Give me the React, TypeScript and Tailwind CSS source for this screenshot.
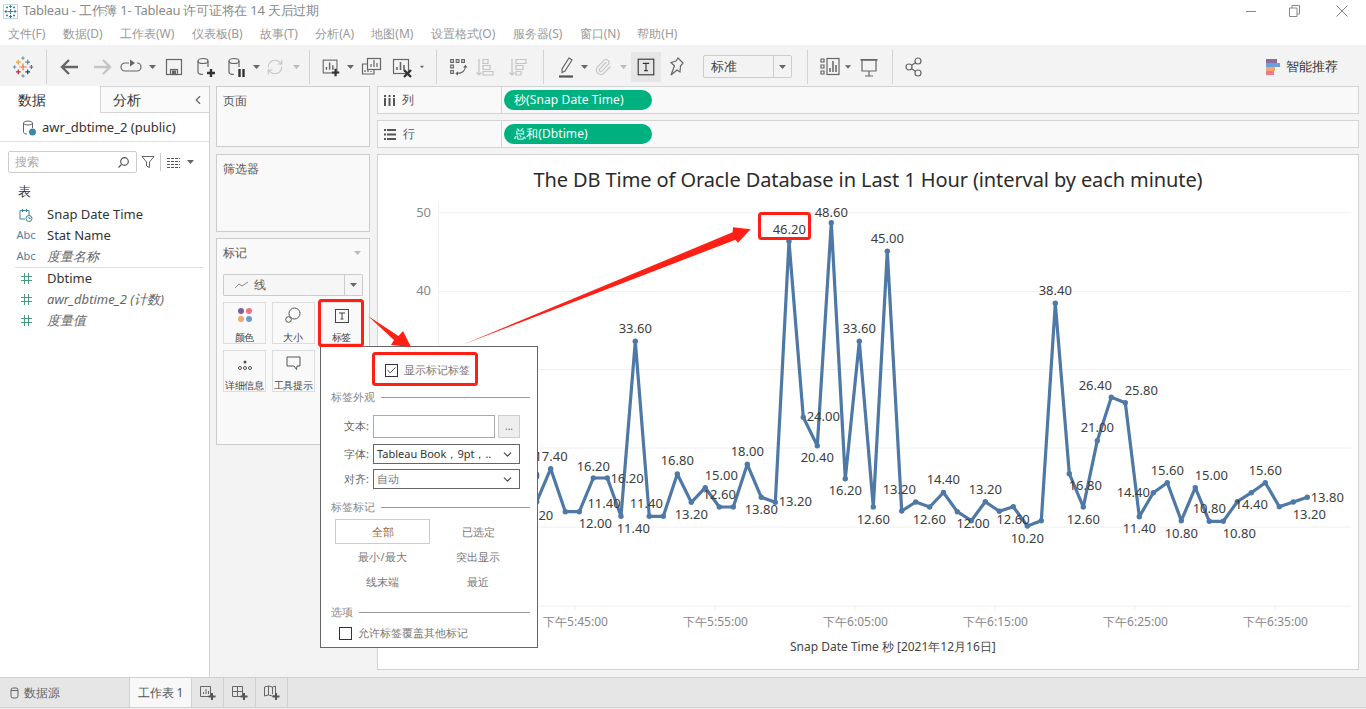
import { ChevronDown, ChevronLeft, Paperclip, RefreshCw, Check } from "lucide-react";
import type { ReactNode } from "react";

const points: [number, number][] = [
  [522, 484], [536.7, 501.7], [550.7, 468.7], [565.3, 511.7], [579.3, 511.7], [593.3, 478], [607.3, 478], [621, 516.3],
  [635.3, 341.3], [649.3, 516.3], [663.3, 516.3], [677.3, 474], [691.3, 502.3], [705.3, 487.7], [719.3, 507], [733.3, 507],
  [747.3, 464.3], [761.3, 497.3], [775.3, 502.3], [789, 241.3], [803.3, 417.3], [817.3, 445.7], [831.3, 222.7], [845.3, 478.7],
  [859.3, 341.3], [873.3, 507], [887.3, 251.3], [901.7, 511], [915.7, 502], [929.7, 507], [943.5, 492.5], [957.3, 511.7],
  [971.3, 520.7], [985.3, 501.7], [999.3, 511.3], [1013.3, 506.7], [1027.3, 526], [1041.3, 520.7], [1055.3, 303.3], [1069.3, 473.7],
  [1083.3, 507], [1097.3, 440.7], [1111.3, 397.3], [1125.3, 402.7], [1139.3, 516.7], [1153.3, 492.7], [1167.3, 482.7], [1181.3, 520.7],
  [1195.3, 487.7], [1209.3, 521.3], [1223.3, 521.3], [1237.3, 501.7], [1251.3, 492.7], [1265.3, 482.7], [1279.3, 506.7], [1293.3, 502],
  [1307.3, 497.3],
];

const labels: [string, number, number][] = [
  ["15.00", 523, 475], ["13.20", 536.7, 515], ["17.40", 551, 456], ["16.20", 593.3, 465.7], ["16.20", 627, 478.3], ["11.40", 604, 503.3],
  ["12.00", 595.3, 523.3], ["11.40", 633.3, 528.3], ["33.60", 635.3, 328.3], ["11.40", 646.3, 503.3], ["16.80", 677.3, 460.3],
  ["13.20", 691.3, 514.3], ["15.00", 721.3, 475.3], ["12.60", 719.3, 494.3], ["18.00", 747.3, 451.3], ["13.80", 761.3, 509.3],
  ["13.20", 795.3, 501.3], ["46.20", 789.3, 229.3], ["48.60", 831.3, 212.3], ["24.00", 823.3, 416.3], ["20.40", 817.3, 457.3],
  ["33.60", 859.3, 328.3], ["16.20", 845.3, 490.3], ["45.00", 887.3, 238.3], ["12.60", 873.3, 519.3], ["13.20", 899.3, 489.3],
  ["12.60", 929.3, 519.3], ["14.40", 943.3, 479.3], ["13.20", 985.3, 489.3], ["12.00", 973, 523.3], ["12.60", 1013, 519.3],
  ["10.20", 1027.3, 538.3], ["38.40", 1055.3, 290.3], ["16.80", 1085.3, 485.3], ["12.60", 1083.3, 519.3], ["21.00", 1097.3, 427.3],
  ["26.40", 1095.3, 385.3], ["25.80", 1141.3, 390.3], ["14.40", 1133.3, 492.3], ["11.40", 1139.3, 528.3], ["15.60", 1167.3, 470.3],
  ["10.80", 1181.3, 533.3], ["15.00", 1211.3, 475.3], ["10.80", 1209.3, 508.3], ["10.80", 1239.3, 533.3], ["14.40", 1251.3, 504.3],
  ["15.60", 1265.3, 470.3], ["13.20", 1309.3, 514.3], ["13.80", 1327.3, 497.3],
];

const menus = ["文件(F)", "数据(D)", "工作表(W)", "仪表板(B)", "故事(T)", "分析(A)", "地图(M)", "设置格式(O)", "服务器(S)", "窗口(N)", "帮助(H)"];
const gridY = [212.7, 291.5, 369.5, 448, 527, 606];
const ticks = [["下午5:45:00", 575], ["下午5:55:00", 715], ["下午6:05:00", 855], ["下午6:15:00", 995], ["下午6:25:00", 1135], ["下午6:35:00", 1275]] as const;

function Ico({ children, size = 24, color = "#666" }: { children: ReactNode; size?: number; color?: string }) {
  return (
    <svg width={size} height={size} viewBox="0 0 24 24" fill="none" stroke={color} strokeWidth="1.2">
      {children}
    </svg>
  );
}

function Cell({ className, children }: { className: string; children?: ReactNode }) {
  return <div className={`flex shrink-0 items-center justify-center ${className}`}>{children}</div>;
}

function Caret({ color = "#666" }: { color?: string }) {
  return (
    <svg width="7" height="4" viewBox="0 0 7 4">
      <path d="M0 0h7L3.500 4z" fill={color} />
    </svg>
  );
}

function Sep({ className }: { className: string }) {
  return <div className={`h-[34px] w-px shrink-0 bg-[#d4d4d4] ${className}`} />;
}

function TableauLogo() {
  const crosses: [number, number, number, string][] = [
    [12, 12, 3.6, "#e8762c"], [7.3, 7.2, 2.4, "#e8a33d"], [16.7, 7.2, 2.4, "#5b879b"], [3.6, 12, 1.8, "#5b9bb5"], [20.4, 12, 2, "#5b6f9b"],
    [12, 3.2, 1.6, "#7099a6"], [12, 20.8, 1.6, "#7099a6"], [7.3, 16.8, 2.4, "#c72037"], [16.7, 16.8, 2.4, "#1f447d"],
  ];
  return (
    <svg width="24" height="24" viewBox="0 0 24 24">
      {crosses.map(([x, y, s, c], i) => (
        <path key={i} d={`M${x - s} ${y}h${s * 2}M${x} ${y - s}v${s * 2}`} stroke={c} strokeWidth="1.200" />
      ))}
    </svg>
  );
}

function BarChartBox({ x = 3, y = 4 }: { x?: number; y?: number }) {
  return (
    <g transform={`translate(${x} ${y})`}>
      <rect x="0.5" y="0.5" width="15" height="14" />
      <path d="M4 11V8M7.5 11V3M11 11V6" strokeWidth="1.6" />
    </g>
  );
}

function Toolbar() {
  const on = "#666";
  const off = "#c4c4c4";
  return (
    <div className="flex h-[39px] shrink-0 items-center bg-[#f3f3f3] pt-[4px]">
      <Cell className="w-[46px]"><TableauLogo /></Cell>
      <Sep className="mr-[7px]" />
      <Cell className="w-[32px]">
        <Ico><path d="M20 12H4M11 5l-7 7 7 7" stroke={on} strokeWidth="2.4" /></Ico>
      </Cell>
      <Cell className="w-[32px]">
        <Ico><path d="M4 12h16M13 5l7 7-7 7" stroke={off} strokeWidth="2.4" /></Ico>
      </Cell>
      <Cell className="w-[26px]">
        <Ico><path d="M10 8H6a4 4 0 0 0 0 8h12a4 4 0 0 0 0-8" /><path d="M11 4.5l5 3.5-5 3.5z" fill={on} stroke="none" /></Ico>
      </Cell>
      <Cell className="w-[16px]"><Caret /></Cell>
      <Cell className="w-[28px]">
        <Ico><rect x="4.5" y="4.5" width="15" height="15" /><rect x="8.5" y="14.5" width="7" height="5" /><rect x="10.5" y="16" width="3" height="3" fill={on} /></Ico>
      </Cell>
      <Cell className="w-[34px]">
        <Ico><path d="M5 6v11c0 1.500 2 2.500 5 2.500M15 6v6" /><ellipse cx="10" cy="6" rx="5" ry="2.500" /><path d="M18 14v8M14 18h8" stroke="#333" strokeWidth="2.400" /></Ico>
      </Cell>
      <Cell className="w-[28px]">
        <Ico><path d="M5 6v11c0 1.500 2 2.500 5 2.500M15 6v6" /><ellipse cx="10" cy="6" rx="5" ry="2.500" /><path d="M15.500 14v8M19.500 14v8" stroke="#333" strokeWidth="2.400" /></Ico>
      </Cell>
      <Cell className="w-[12px]"><Caret /></Cell>
      <Cell className="w-[26px]"><RefreshCw size={18} color={off} strokeWidth={1.500} /></Cell>
      <Cell className="w-[16px]"><Caret color="#bbb" /></Cell>
      <Sep className="ml-[5px] mr-[10px]" />
      <Cell className="w-[22px]">
        <Ico><BarChartBox /><path d="M17 14v8M13 18h8" stroke="#333" strokeWidth="2.400" /></Ico>
      </Cell>
      <Cell className="w-[16px]"><Caret /></Cell>
      <Cell className="w-[26px]">
        <Ico>
          <rect x="8.500" y="3.500" width="13" height="11" />
          <path d="M12 12V9M15 12V5M18 12V8" />
          <path d="M8 9H3.500v10H15v-4" />
          <path d="M6 17v-2M9 17v-2M12 17v-1" />
        </Ico>
      </Cell>
      <Cell className="w-[36px]">
        <Ico><BarChartBox /><path d="M14 15l7 7M21 15l-7 7" stroke="#333" strokeWidth="2.400" /></Ico>
      </Cell>
      <Cell className="w-[4px]"><Caret /></Cell>
      <Sep className="ml-[12px] mr-[10px]" />
      <Cell className="w-[22px]">
        <Ico>
          <path d="M4 4h3v3H4zM10 4h3v3h-3zM16 4h3v3h-3zM4 10h3v3H4zM4 16h3v3H4z" />
          <path d="M20 11c0 5-3 8-9 8" />
          <path d="M17.500 12.500L20 9.500l2.500 3zM12 16.500L9 19l3 2.500z" fill={on} stroke="none" />
        </Ico>
      </Cell>
      <Cell className="w-[30px]">
        <Ico color={off}>
          <path d="M7 4v16M4.500 17.500L7 20l2.500-2.500" />
          <path d="M11 4.500h5v4h-5zM11 10.500h7v4h-7zM11 16.500h10v3.500H11z" />
        </Ico>
      </Cell>
      <Cell className="w-[36px]">
        <Ico color={off}>
          <path d="M7 4v16M4.500 17.500L7 20l2.500-2.500" />
          <path d="M11 4.500h10v4H11zM11 10.500h7v4h-7zM11 16.500h5v3.500h-5z" />
        </Ico>
      </Cell>
      <Sep className="ml-[8px] mr-[8px]" />
      <Cell className="w-[28px]">
        <Ico>
          <path d="M15 3l3 2-7 11-3 1.500L8 14z" />
          <path d="M5 21.500h14" stroke="#555" strokeWidth="2.200" />
        </Ico>
      </Cell>
      <Cell className="w-[8px]"><Caret /></Cell>
      <Cell className="w-[30px]"><Paperclip size={18} color={off} strokeWidth={1.500} /></Cell>
      <Cell className="w-[10px]"><Caret color="#bbb" /></Cell>
      <Cell className="ml-[3px] h-[30px] w-[30px] bg-[#e6e6e6]">
        <Ico size={22}>
          <rect x="3.500" y="3.500" width="17" height="17" stroke="#333" />
          <path d="M8.500 8h7M12 8v8M10 16h4" stroke="#333" />
        </Ico>
      </Cell>
      <Cell className="w-[30px]">
        <Ico>
          <path d="M14 3l-2 3-5 1.500 3.500 3.500L7 20l6-5 3 2 .5-6L19 8z" />
        </Ico>
      </Cell>
      <div className="ml-[12px] flex h-[23px] w-[89px] shrink-0 items-center rounded-[2px] border border-[#ccc] bg-[#f3f3f3]">
        <span className="flex-1 pl-[7px] text-[13px] text-[#444]">标准</span>
        <div className="flex h-full w-[18px] items-center justify-center border-l border-[#ccc]"><Caret /></div>
      </div>
      <Sep className="ml-[15px] mr-[7px]" />
      <Cell className="w-[30px]">
        <Ico>
          <path d="M3 4h3v3H3zM3 10h3v3H3zM3 16h3v3H3z" />
          <rect x="9" y="3.500" width="12" height="16" />
          <path d="M12 17v-4M15 17V6M18 17v-7" strokeWidth="1.500" />
        </Ico>
      </Cell>
      <Cell className="w-[6px]"><Caret /></Cell>
      <Cell className="ml-[3px] w-[30px]">
        <Ico>
          <path d="M3.500 4h17v1.800h-17z" fill="#666" stroke="none" />
          <path d="M5 5.500v10.500h14V5.500M12 16v5M8 21h8" />
        </Ico>
      </Cell>
      <Sep className="ml-[8px] mr-[6px]" />
      <Cell className="w-[30px]">
        <Ico>
          <circle cx="16" cy="6" r="3" />
          <circle cx="7" cy="12" r="3" />
          <circle cx="16" cy="18" r="3" />
          <path d="M9.500 10.500l4-3M9.500 13.500l4 3" />
        </Ico>
      </Cell>
      <div className="ml-auto mr-[28px] flex items-center gap-[6px]">
        <div className="flex w-[14px] flex-col">
          <div className="h-[4px] w-[11px] bg-[#8a6d9b]" />
          <div className="h-[4px] w-[14px] bg-[#6f9fd8]" />
          <div className="h-[4px] w-[9px] bg-[#f2a673]" />
          <div className="h-[4px] w-[8px] bg-[#f4768a]" />
        </div>
        <span className="text-[13px] text-[#333]">智能推荐</span>
      </div>
    </div>
  );
}

function Field({ icon, children, italic }: { icon: ReactNode; children: ReactNode; italic?: boolean }) {
  return (
    <div className="flex h-[21px] items-center">
      <div className="flex w-[47px] justify-center pl-[11px] pr-[6px]">{icon}</div>
      <span className={italic ? "text-[13px] italic text-[#666]" : "text-[13px] text-[#333]"}>{children}</span>
    </div>
  );
}

const abc = <span className="text-[11px] text-[#4a7f9b]">Abc</span>;
const hash = (
  <svg width="11" height="11" viewBox="0 0 11 11" stroke="#4a9a7c" strokeWidth="1">
    <path d="M0 3.500h11M0 7.500h11M3.500 0v11M7.500 0v11" />
  </svg>
);

function Sidebar() {
  return (
    <aside className="mt-[2px] flex w-[210px] shrink-0 flex-col border-r border-[#d0d0d0] bg-white">
      <div className="flex h-[27px] shrink-0">
        <div className="flex w-[100px] items-center pl-[18px] text-[14px] text-[#333]">数据</div>
        <div className="flex flex-1 items-center justify-between border-l border-t border-b border-[#d4d4d4] bg-[#fafafa] pl-[12px] pr-[4px] text-[14px] text-[#333]">
          分析
          <ChevronLeft size={14} color="#666" />
        </div>
      </div>
      <div className="flex h-[29px] shrink-0 items-center gap-[6px] border-b border-[#e0e0e0] pl-[22px] pt-[2px] text-[13px] text-[#333]">
        <svg width="14" height="16" viewBox="0 0 14 16" fill="none" stroke="#666">
          <ellipse cx="6" cy="3" rx="4.500" ry="2" />
          <path d="M1.500 3v9c0 1 1.500 2 3.500 2M10.500 3v5" />
          <circle cx="10.500" cy="12" r="3.500" fill="#3d87a8" stroke="none" />
        </svg>
        awr_dbtime_2 (public)
      </div>
      <div className="mt-[9px] flex h-[22px] shrink-0 items-center pl-[8px]">
        <div className="flex h-[22px] w-[129px] items-center justify-between rounded-[2px] border border-[#ccc] pl-[6px] pr-[6px]">
          <span className="text-[12px] text-[#aaa]">搜索</span>
          <svg width="13" height="13" viewBox="0 0 13 13" fill="none" stroke="#555" strokeWidth="1.200">
            <circle cx="7.500" cy="5.500" r="3.800" />
            <path d="M4.500 8.500L1.500 11.500" />
          </svg>
        </div>
        <svg className="ml-[4px]" width="14" height="14" viewBox="0 0 14 14" fill="none" stroke="#666">
          <path d="M1 1.500h12L8.500 7v5.500l-3-1.500V7z" />
        </svg>
        <div className="ml-[5px] h-[18px] w-px bg-[#ccc]" />
        <svg className="ml-[6px]" width="13" height="11" viewBox="0 0 13 11" stroke="#555">
          <path d="M0 1.500h13M0 4.500h13M0 7.500h13M0 10.500h13" strokeDasharray="3 1" />
        </svg>
        <div className="ml-[7px]"><Caret /></div>
      </div>
      <div className="mt-[8px] pl-[18px] text-[13px] leading-[20px] text-[#333]">表</div>
      <div className="mt-[3px]">
        <Field
          icon={
            <svg width="14" height="14" viewBox="0 0 14 14" fill="none" stroke="#3f7f9f">
              <path d="M1 2.500h9V7M1 2.500V11h5M3.500 1v3M7.500 1v3" />
              <circle cx="10" cy="10.500" r="3" />
              <path d="M10 9v1.500h1.500" />
            </svg>
          }
        >
          Snap Date Time
        </Field>
        <Field icon={abc}>Stat Name</Field>
        <Field icon={abc} italic>度量名称</Field>
      </div>
      <div className="mx-[15px] h-px w-[188px] bg-[#ddd]" />
      <div className="-mt-[1px] pt-[1px]">
        <Field icon={hash}>Dbtime</Field>
        <Field icon={hash} italic>awr_dbtime_2 (计数)</Field>
        <Field icon={hash} italic>度量值</Field>
      </div>
    </aside>
  );
}

function Tile({ icon, label, className }: { icon: ReactNode; label: string; className?: string }) {
  return (
    <div className={`flex h-[42px] w-[43px] flex-col items-center border border-[#ddd] ${className ?? ""}`}>
      <div className="flex h-[20px] items-end justify-center">{icon}</div>
      <span className="mt-[8px] whitespace-nowrap text-[10px] leading-[12px] tracking-[-0.3px] text-[#444]">{label}</span>
    </div>
  );
}

function MarksCard() {
  return (
    <div className="mt-[6px] flex h-[207px] flex-col border border-[#ccc] bg-[#f9f9f9] px-[6px]">
      <div className="flex h-[28px] shrink-0 items-center justify-between pr-[2px] text-[12px] text-[#555]">
        标记
        <Caret color="#bbb" />
      </div>
      <div className="mt-[7px] flex h-[22px] w-[140px] shrink-0 items-center rounded-[1px] border border-[#ccc] bg-[#f6f6f6]">
        <svg className="ml-[11px]" width="13" height="8" viewBox="0 0 13 8" fill="none" stroke="#888">
          <path d="M0 7l4-4 3 2 6-4" />
        </svg>
        <span className="ml-[6px] flex-1 text-[12px] text-[#555]">线</span>
        <div className="flex h-full w-[18px] items-center justify-center border-l border-[#ccc]"><Caret /></div>
      </div>
      <div className="mt-[6px] grid w-[140px] grid-cols-[43px_43px_43px] gap-x-[5.500px] gap-y-[6px]">
        <Tile
          label="颜色"
          icon={
            <svg width="16" height="16" viewBox="0 0 16 16">
              <circle cx="4" cy="4" r="3" fill="#7b5f8f" />
              <circle cx="12" cy="4" r="3" fill="#f0708a" />
              <circle cx="4" cy="12" r="3" fill="#f2a673" />
              <circle cx="12" cy="12" r="3" fill="#6f9bc8" />
            </svg>
          }
        />
        <Tile
          label="大小"
          icon={
            <svg width="16" height="16" viewBox="0 0 16 16" fill="none" stroke="#555">
              <circle cx="9.500" cy="6.500" r="5.500" />
              <circle cx="3.500" cy="12.500" r="2.800" fill="#f9f9f9" />
            </svg>
          }
        />
        <Tile
          label="标签"
          icon={
            <svg width="14" height="14" viewBox="0 0 14 14" fill="none" stroke="#444">
              <rect x="0.500" y="0.500" width="13" height="13" />
              <path d="M4 4h6M7 4v6M5.500 10h3" />
            </svg>
          }
        />
        <Tile
          label="详细信息"
          icon={
            <svg width="14" height="12" viewBox="0 0 14 12" fill="none" stroke="#555">
              <circle cx="7" cy="3" r="1.500" fill="#555" stroke="none" />
              <circle cx="2" cy="9" r="1.500" />
              <circle cx="7" cy="9" r="1.500" />
              <circle cx="12" cy="9" r="1.500" />
            </svg>
          }
        />
        <Tile
          label="工具提示"
          icon={
            <svg width="15" height="15" viewBox="0 0 15 15" fill="none" stroke="#555">
              <path d="M1 1h13v9h-3l-.5 3.500L8 10H1z" />
            </svg>
          }
        />
      </div>
    </div>
  );
}

function Shelf({ icon, label, pill, className }: { icon: ReactNode; label: string; pill: string; className?: string }) {
  return (
    <div className={`flex h-[28px] shrink-0 items-center border border-[#d4d4d4] bg-[#f9f9f9] ${className ?? ""}`}>
      <div className="flex h-full w-[124px] shrink-0 items-center gap-[7px] border-r border-[#d4d4d4] pl-[6px] text-[12px] text-[#555]">
        {icon}
        {label}
      </div>
      <div className="ml-[2px] flex h-[20px] w-[148px] items-center rounded-full bg-[#00b180] pl-[10px] text-[12px] tracking-[0.1px] text-white">{pill}</div>
    </div>
  );
}

function Chart() {
  const d = points.map(([x, y], i) => `${i === 0 ? "M" : "L"}${x} ${y}`).join(" ");
  return (
    <div className="mt-[6px] flex h-[516px] shrink-0 flex-col border border-[#d4d4d4] bg-white">
      <div className="flex h-[47px] shrink-0 items-center justify-center pt-[3px] text-[20px] tracking-[-0.1px] text-[#2b2b2b]">
        The DB Time of Oracle Database in Last 1 Hour (interval by each minute)
      </div>
      <svg width="980" height="430" viewBox="378 202 980 430" className="shrink-0">
        {gridY.map((y) => (
          <line key={y} x1="438" x2="1351" y1={y} y2={y} stroke="#f0f0f0" strokeWidth="1" />
        ))}
        <line x1="438.500" x2="438.500" y1="202" y2="606" stroke="#f0f0f0" />
        {ticks.map(([t, x]) => (
          <g key={x}>
            <line x1={x} x2={x} y1="606" y2="610" stroke="#eee" />
            <text x={x + 0.5} y="626" textAnchor="middle" fontSize="12" fill="#888">{t}</text>
          </g>
        ))}
        <text x="431" y="217" textAnchor="end" fontSize="13" fill="#888">50</text>
        <text x="431" y="295" textAnchor="end" fontSize="13" fill="#888">40</text>
        <path d={d} fill="none" stroke="#4e79a7" strokeWidth="3.200" strokeLinejoin="round" />
        {points.map(([x, y]) => (
          <circle key={x} cx={x} cy={y} r="2.700" fill="#4e79a7" />
        ))}
        {labels.map(([t, x, y], i) => (
          <text key={i} x={x} y={y + 5} textAnchor="middle" fontSize="13" fill="#3c3c3c">{t}</text>
        ))}
      </svg>
      <div className="flex h-[30px] shrink-0 items-center pl-[412px] text-[12px] text-[#444]">
        Snap Date Time 秒 [2021年12月16日]
      </div>
    </div>
  );
}

function Heading({ label }: { label: string }) {
  return (
    <div className="flex h-[16px] shrink-0 items-center gap-[6px] pl-[10px] pr-[7px] text-[11px] text-[#888]">
      {label}
      <div className="h-px flex-1 bg-[#999]" />
    </div>
  );
}

function Box({ checked }: { checked?: boolean }) {
  return (
    <div className="flex h-[13px] w-[13px] shrink-0 items-center justify-center border border-[#333] bg-white">
      {checked && <Check size={11} color="#333" strokeWidth={2} />}
    </div>
  );
}

function FormRow({ label, className, children }: { label: string; className: string; children: ReactNode }) {
  return (
    <div className={`flex shrink-0 items-center pl-[10px] ${className}`}>
      <span className="w-[39px] pr-px text-right text-[11px] text-[#666]">{label}</span>
      {children}
    </div>
  );
}

function SelectBox({ text, dark }: { text: string; dark?: boolean }) {
  return (
    <div className="ml-[3px] flex h-full w-[147px] items-center justify-between border border-[#666] pl-[3px] pr-[5px]">
      <span className={dark ? "text-[11px] text-[#333]" : "text-[11px] text-[#777]"}>{text}</span>
      <ChevronDown size={13} color="#444" />
    </div>
  );
}

function LabelPopup() {
  const opts = ["全部", "已选定", "最小/最大", "突出显示", "线末端", "最近"];
  return (
    <div className="absolute left-[320px] top-[346px] flex h-[302px] w-[218px] flex-col border border-[#666] bg-white">
      <div className="flex h-[42px] shrink-0 items-center gap-[6px] pl-[64px] pt-[4px]">
        <Box checked />
        <span className="text-[11px] text-[#777]">显示标记标签</span>
      </div>
      <Heading label="标签外观" />
      <FormRow label="文本:" className="mt-[10px] h-[23px]">
        <div className="ml-[3px] h-full w-[122px] border border-[#aaa]" />
        <div className="ml-[3px] flex h-full w-[22px] items-center justify-center border border-[#ccc] bg-[#eee] text-[10px] text-[#666]">...</div>
      </FormRow>
      <FormRow label="字体:" className="mt-[6px] h-[20px]">
        <SelectBox text="Tableau Book，9pt，.." dark />
      </FormRow>
      <FormRow label="对齐:" className="mt-[5px] h-[20px]">
        <SelectBox text="自动" />
      </FormRow>
      <div className="mt-[10px]"><Heading label="标签标记" /></div>
      <div className="ml-[14px] mt-[4px] grid w-[191px] shrink-0 grid-cols-[95px_96px] grid-rows-[25px_25px_25px] text-[11px] text-[#777]">
        {opts.map((o, i) => (
          <div key={o} className={i === 0 ? "flex items-center justify-center border border-[#ccc] pt-px text-[#a0673a]" : "flex items-center justify-center pt-px"}>
            {o}
          </div>
        ))}
      </div>
      <div className="mt-[10px]"><Heading label="选项" /></div>
      <div className="ml-[18px] mt-[5px] flex items-center gap-[6px]">
        <Box />
        <span className="text-[11px] text-[#777]">允许标签覆盖其他标记</span>
      </div>
    </div>
  );
}

function Annotations() {
  const red = "#ff2015";
  return (
    <svg className="pointer-events-none absolute left-0 top-0" width="1366" height="709" viewBox="0 0 1366 709" fill="none">
      <rect x="319.500" y="300.500" width="43" height="45" rx="2" stroke={red} strokeWidth="3" />
      <rect x="373.500" y="353.500" width="103" height="31" rx="2" stroke={red} strokeWidth="3" />
      <rect x="759.500" y="213.500" width="50" height="25" rx="2" stroke={red} strokeWidth="3" />
      <path d="M368 316L398.500 336L403 331L411 347L391 345L394 340Z" fill={red} />
      <path d="M462 345L732.600 232.300L733 227.300L750.700 229.300L738 242.700L735.500 239.700Z" fill={red} />
    </svg>
  );
}

export default function App() {
  return (
    <div className="relative flex h-[709px] w-[1366px] flex-col overflow-hidden bg-[#f3f3f3] font-['Lato','Noto_Sans_CJK_SC',sans-serif]">
      <div className="flex h-[22px] shrink-0 items-center bg-white pl-[3px] text-[13px] text-[#8a8a8a]">
        <svg width="15" height="15" viewBox="0 0 15 15" stroke="#2f7fa8" strokeWidth="1" fill="none">
          <rect x="0.500" y="0.500" width="14" height="14" stroke="#bcd6e4" />
          <path d="M5 7.500h5M7.500 5v5M6 2.500h3M7.500 1v3M6 12.500h3M7.500 11v3M1.500 7.500h3M3 6v3M10.500 7.500h3M12 6v3M3 3.500h2M4 2.500v2M10 3.500h2M11 2.500v2M3 11.500h2M4 10.500v2M10 11.500h2M11 10.500v2" />
        </svg>
        <span className="ml-[5px] tracking-[-0.25px]">Tableau - 工作簿 1- Tableau 许可证将在 14 天后过期</span>
        <div className="ml-auto flex items-center">
          <div className="mr-[33px] h-px w-[10px] bg-[#888]" />
          <svg className="mr-[36px]" width="11" height="12" viewBox="0 0 11 12" fill="none" stroke="#888">
            <path d="M3 3V.5h7.500V9H8M.5 3h7.500v8.500H.5z" />
          </svg>
          <svg className="mr-[18px]" width="12" height="12" viewBox="0 0 12 12" stroke="#888">
            <path d="M.5 .5l11 11M11.500 .5l-11 11" />
          </svg>
        </div>
      </div>
      <div className="flex h-[23px] shrink-0 items-center gap-[17.300px] bg-white pl-[8px] text-[12px] text-[#999]">
        {menus.map((m) => (
          <span key={m}>{m}</span>
        ))}
      </div>
      <Toolbar />
      <div className="flex min-h-0 flex-1">
        <Sidebar />
        <div className="ml-[6px] mt-[2px] flex w-[154px] shrink-0 flex-col">
          <div className="h-[61px] border border-[#ccc] bg-[#f9f9f9] pl-[6px] pt-[5px] text-[12px] text-[#555]">页面</div>
          <div className="mt-[7px] h-[78px] border border-[#ccc] bg-[#f9f9f9] pl-[6px] pt-[5px] text-[12px] text-[#555]">筛选器</div>
          <MarksCard />
        </div>
        <div className="ml-[7px] mt-[2px] flex w-[982px] shrink-0 flex-col">
          <Shelf
            label="列"
            pill="秒(Snap Date Time)"
            icon={
              <svg width="11" height="11" viewBox="0 0 11 11" fill="#555">
                <path d="M0 3h2v8H0zM4.500 3h2v8h-2zM9 3h2v8H9zM0 0h2v2H0zM4.500 0h2v2h-2zM9 0h2v2H9z" />
              </svg>
            }
          />
          <Shelf
            label="行"
            className="mt-[6px]"
            pill="总和(Dbtime)"
            icon={
              <svg width="12" height="11" viewBox="0 0 12 11" fill="#555">
                <path d="M0 0h2v2H0zM3 0h9v2H3zM0 4.500h2v2H0zM3 4.500h9v2H3zM0 9h2v2H0zM3 9h9v2H3z" />
              </svg>
            }
          />
          <Chart />
        </div>
      </div>
      <div className="flex h-[31px] shrink-0 border-t border-b border-[#d0d0d0] bg-[#e6e6e6] text-[12px] text-[#666]">
        <div className="flex w-[130px] items-center gap-[5px] border-r border-[#d0d0d0] pl-[10px]">
          <svg width="9" height="12" viewBox="0 0 9 12" fill="none" stroke="#666">
            <rect x="1" y="1" width="7" height="10" rx="2" />
            <path d="M1 3.500h7" />
          </svg>
          数据源
        </div>
        <div className="flex w-[62px] items-center justify-center border-r border-[#d0d0d0] bg-[#f8f8f8] text-[#555]">工作表 1</div>
        {[0, 1, 2].map((i) => (
          <div key={i} className="flex w-[32px] items-center justify-center border-r border-[#d0d0d0]">
            <svg width="18" height="18" viewBox="0 0 18 18" fill="none" stroke="#666">
              {i === 0 && <path d="M1.500 2.500h10v10h-10zM4.500 10V8M7 10V5M9.500 10V7" />}
              {i === 1 && <path d="M1.500 2.500h10v10h-10zM1.500 7.500h10M6.500 2.500v10" />}
              {i === 2 && <path d="M1.500 3l4-1 4 1 3-1v10h-3l-4-1-4 1zM5.500 2v9M9.500 3v7" />}
              <path d="M13 9v7M9.500 12.500h7" stroke="#555" strokeWidth="2" />
            </svg>
          </div>
        ))}
      </div>
      <div className="h-[1px] shrink-0" />
      <LabelPopup />
      <Annotations />
    </div>
  );
}
